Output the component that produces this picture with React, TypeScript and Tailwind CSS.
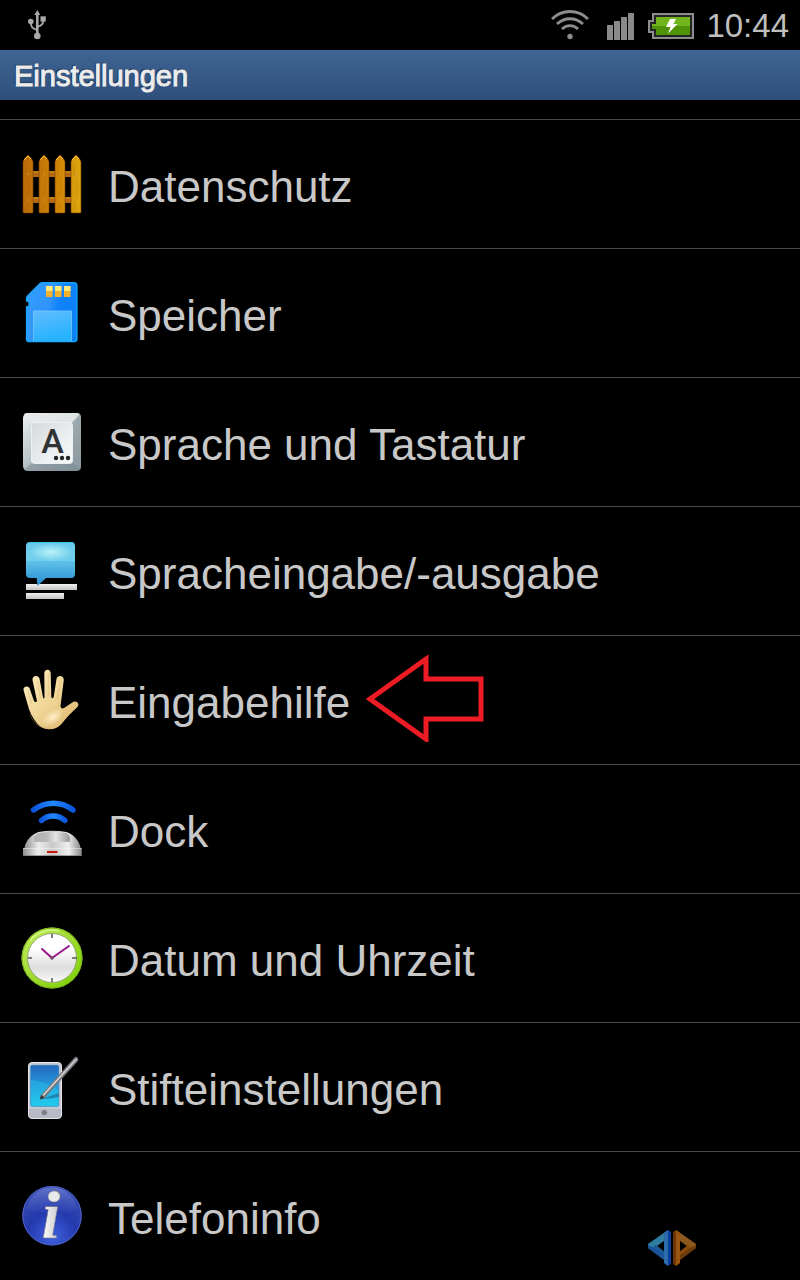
import type { ReactNode } from "react";

function UsbIcon() {
  return (
    <svg width="18" height="30" viewBox="0 0 18 30" fill="none" stroke="#a9a9a9" strokeWidth="1.8">
      <path d="M9.3 4v20" strokeWidth="2.6" />
      <path d="M2.8 12c0 5 1.5 6.5 6.5 8M15.3 10c0 4-1.5 5.5-6 7" />
      <path d="M9.3 0l3 5h-6z" fill="#a9a9a9" stroke="none" />
      <circle cx="2.8" cy="11.5" r="2.8" fill="#a9a9a9" stroke="none" />
      <rect x="12.5" y="6.3" width="5.3" height="5.3" fill="#a9a9a9" stroke="none" />
      <circle cx="9.3" cy="26" r="3.3" fill="#a9a9a9" stroke="none" />
    </svg>
  );
}

function WifiIcon() {
  return (
    <svg width="38" height="30" viewBox="0 0 38 30" fill="none" stroke="#8d8d8d" strokeWidth="2.8">
      <path d="M1 9c10-10 26-10 36 0" />
      <path d="M6 14c7.500-7 18.500-7 26 0" />
      <path d="M11 19c4.500-4.500 11.500-4.500 16 0" />
      <circle cx="19" cy="26.500" r="2.700" fill="#8d8d8d" stroke="none" />
    </svg>
  );
}

function SignalIcon() {
  return (
    <svg width="27" height="27" viewBox="0 0 27 27" fill="#8a8a8a">
      <rect x="0" y="12" width="6" height="15" rx="0.5" />
      <rect x="7" y="8" width="6" height="19" rx="0.5" />
      <rect x="14" y="4" width="6" height="23" rx="0.5" />
      <rect x="21" y="0" width="6" height="27" rx="0.5" />
    </svg>
  );
}

function BatteryIcon() {
  return (
    <svg width="46" height="26" viewBox="0 0 46 26">
      <path d="M4 0h42v26H4v-6H0V7h4z" fill="#8d8d8d" />
      <path d="M6 2h38v22H6v-6H2V9h4z" fill="#242424" />
      <path d="M8 4h34v18H8v-6H4v-5h4z" fill="#4f9407" />
      <path d="M8 4h34v9H4v-2h4z" fill="#70b51c" />
      <path d="M22 6h6l-2.5 5h4L20 20.500l2.5-6.5H18z" fill="#fff" />
    </svg>
  );
}

function FenceIcon() {
  return (
    <svg className="shrink-0" width="64" height="64" viewBox="0 0 64 64">
      <defs>
        <linearGradient id="wood" x1="0" x2="64" y1="0" y2="0" gradientUnits="userSpaceOnUse">
          <stop offset="0" stopColor="#b96808" />
          <stop offset="0.6" stopColor="#cf8506" />
          <stop offset="1" stopColor="#e0aa10" />
        </linearGradient>
      </defs>
      <path d="M5 19h54v6H5zM5 45h54v6H5z" fill="#b3690c" />
      <path d="M12 20h42M12 46h42" stroke="#d99420" />
      {[3, 19, 35, 51].map((x) => (
        <g key={x}>
          <path d={`M${x} 10q0-1 2-4l3-3 3 3q2 3 2 4v50q0 1-1 1h-8q-1 0-1-1z`} fill="url(#wood)" stroke="#7c4304" strokeWidth="0.6" />
          <path d={`M${x + 1} 8l4-4 3 3`} fill="none" stroke="#ffc238" strokeWidth="1" />
          <path d={`M${x + 3} 12v12M${x + 6} 27v16M${x + 4} 51v7`} stroke="#9c5b05" strokeWidth="0.7" opacity="0.3" />
          <circle cx={x + 5} cy="22" r="0.8" fill="#c09a58" />
          <circle cx={x + 5} cy="48" r="0.8" fill="#c09a58" />
        </g>
      ))}
    </svg>
  );
}

function StorageIcon() {
  return (
    <svg className="shrink-0" width="64" height="64" viewBox="0 0 64 64">
      <defs>
        <linearGradient id="card" x1="0" x2="1" y1="0.2" y2="0.6">
          <stop offset="0" stopColor="#329eff" />
          <stop offset="0.45" stopColor="#2f93fb" />
          <stop offset="0.6" stopColor="#1183fb" />
          <stop offset="1" stopColor="#0a80f5" />
        </linearGradient>
        <linearGradient id="cardLabel" x1="0" x2="0.3" y1="0" y2="1">
          <stop offset="0" stopColor="#63bcff" />
          <stop offset="1" stopColor="#25b2ff" />
        </linearGradient>
      </defs>
      <path d="M22 1.700h32q3 0 3 3V58q0 2.700-3 2.700H9q-2.500 0-2.500-2.700V26l2.500-1v-4l-2.500-1v-3q0-1 1-2L20 2.500q1-.8 2-.8z" fill="url(#card)" stroke="#12aaff" strokeWidth="1.2" />
      <path d="M13.500 30h38v30.500h-38z" fill="url(#cardLabel)" />
      <path d="M13.500 60V30h38v30" fill="none" stroke="#77c8ff" strokeWidth="0.8" />
      {[26, 35, 44].map((x) => (
        <g key={x}>
          <rect x={x} y="5" width="6.5" height="11" fill="#f3b22e" />
          <rect x={x} y="5" width="6.5" height="5" fill="#ffe978" />
        </g>
      ))}
    </svg>
  );
}

function KeyboardIcon() {
  return (
    <svg className="shrink-0" width="64" height="64" viewBox="0 0 64 64">
      <defs>
        <linearGradient id="keyFace" x1="0" x2="1" y1="0" y2="1">
          <stop offset="0" stopColor="#d5dadc" />
          <stop offset="1" stopColor="#fafbfb" />
        </linearGradient>
        <linearGradient id="keySide" x1="0" x2="1" y1="0" y2="1">
          <stop offset="0" stopColor="#eef1f1" />
          <stop offset="0.5" stopColor="#b4bec2" />
          <stop offset="1" stopColor="#74848b" />
        </linearGradient>
      </defs>
      <rect x="3" y="3" width="58" height="58" rx="5" fill="url(#keySide)" />
      <path d="M4 4l8 9h40l8-9q-1-1-3-1H7q-2 0-3 1z" fill="#e8ecec" opacity="0.8" />
      <path d="M60 4l-8 9v40l8 7q1-1 1-3V7q0-2-1-3z" fill="#93a1a6" opacity="0.7" />
      <path d="M4 60l8-7h40l8 7q-1 1-3 1H7q-2 0-3-1z" fill="#84939a" opacity="0.7" />
      <rect x="11.500" y="12.500" width="41" height="41" rx="3" fill="url(#keyFace)" stroke="#eef1f1" />
      <text x="32.500" y="43" textAnchor="middle" fontSize="34" fontWeight="500" fill="#303234" fontFamily="Roboto, sans-serif">A</text>
      <g fill="#232425">
        <circle cx="36" cy="48" r="2.200" />
        <circle cx="42" cy="48" r="2.200" />
        <circle cx="48" cy="48" r="2.200" />
      </g>
    </svg>
  );
}

function SpeechIcon() {
  return (
    <svg className="shrink-0" width="64" height="64" viewBox="0 0 64 64">
      <defs>
        <linearGradient id="bubble" x1="0" x2="0" y1="0" y2="1">
          <stop offset="0" stopColor="#68caea" />
          <stop offset="0.42" stopColor="#72cfec" />
          <stop offset="0.44" stopColor="#5dc2e7" />
          <stop offset="1" stopColor="#278bd0" />
        </linearGradient>
        <radialGradient id="bubbleShine">
          <stop offset="0" stopColor="#c4f6fb" stopOpacity="0.9" />
          <stop offset="1" stopColor="#c4f6fb" stopOpacity="0" />
        </radialGradient>
        <linearGradient id="line" x1="0" x2="0" y1="0" y2="1">
          <stop offset="0" stopColor="#efefef" />
          <stop offset="1" stopColor="#c2c2c2" />
        </linearGradient>
      </defs>
      <rect x="6" y="45" width="51" height="6" fill="url(#line)" />
      <rect x="6" y="54" width="38" height="6" fill="url(#line)" />
      <path d="M10 3h41q4 0 4 4v28q0 4-4 4H26l-8.500 8-.8-8H10q-4 0-4-4V7q0-4 4-4z" fill="url(#bubble)" />
      <ellipse cx="31" cy="13" rx="22" ry="9" fill="url(#bubbleShine)" />
      <path d="M8 4.500q1-1 3-1h39q3 0 4 1" fill="none" stroke="#38c5ef" />
    </svg>
  );
}

function HandIcon() {
  return (
    <svg className="shrink-0" width="64" height="64" viewBox="0 0 64 64">
      <defs>
        <linearGradient id="skin" x1="0" x2="64" y1="0" y2="64" gradientUnits="userSpaceOnUse">
          <stop offset="0" stopColor="#fff0c5" />
          <stop offset="0.5" stopColor="#efd596" />
          <stop offset="1" stopColor="#d9ad61" />
        </linearGradient>
        <radialGradient id="palm">
          <stop offset="0" stopColor="#fff0c9" />
          <stop offset="1" stopColor="#fff0c9" stopOpacity="0" />
        </radialGradient>
      </defs>
      <path
        d="M3.500 22c-.6-3.500 4.500-5 6.200-1.500L14 33q1.500 1.800 3 .3L12.500 12c-.5-4.500 5.500-5.500 7-1.500l3.500 19q.8 2.200 1.500 0L24.300 5c.5-4.500 6-4.500 6.400 0l.6 24q1 2.400 2.400 0L36.500 11c1-4.500 7.500-3.500 7.300 1l-3.300 26q.2 3.500 3.500 2l9-6c4-2 7.500 2.500 4 5.500C51 45 46 50 41.500 56c-6 7-18 7-24 0C12 49 9 43 7.500 36z"
        fill="url(#skin)"
      />
      <ellipse cx="33" cy="49" rx="12" ry="7" transform="rotate(-32 33 49)" fill="url(#palm)" />
      <path d="M40.500 13l-3 17M28.500 6v22M17.500 13l3 17M8.500 24l3 11" stroke="#cda45b" strokeWidth="1.5" opacity="0.25" strokeLinecap="round" />
      <path d="M10 46c4 11 11 15 20 14" fill="none" stroke="#c69a50" opacity="0.4" />
    </svg>
  );
}

function DockIcon() {
  return (
    <svg className="shrink-0" width="64" height="64" viewBox="0 0 64 64">
      <defs>
        <linearGradient id="metal" x1="0" x2="1" y1="0" y2="0">
          <stop offset="0" stopColor="#8e8e8e" />
          <stop offset="0.25" stopColor="#ececec" />
          <stop offset="0.5" stopColor="#c9c9c9" />
          <stop offset="0.78" stopColor="#eeeeee" />
          <stop offset="1" stopColor="#8b8b8b" />
        </linearGradient>
        <linearGradient id="dockTop" x1="0" x2="1" y1="0" y2="0">
          <stop offset="0" stopColor="#b2b2b2" />
          <stop offset="0.35" stopColor="#b9b9b9" />
          <stop offset="0.6" stopColor="#e4e4e4" />
          <stop offset="1" stopColor="#999" />
        </linearGradient>
        <linearGradient id="wave" x1="0" x2="1" y1="0" y2="0">
          <stop offset="0" stopColor="#0b55db" />
          <stop offset="0.5" stopColor="#2388ff" />
          <stop offset="1" stopColor="#0a56dc" />
        </linearGradient>
      </defs>
      <g fill="none" stroke="url(#wave)" strokeLinecap="round" strokeWidth="5.4">
        <path d="M13.500 13c12-9 28-9 39.500 0" />
        <path d="M21.500 23.500c6-6 17-6 23.500 0" />
      </g>
      <path d="M4.500 51c1-8 8-14 14-16q14-2.500 28 0c6 2 13 8 14 16z" fill="url(#metal)" />
      <path d="M18 36q14-2 29 0l3 4v4q0 1-2 1H16q-2 0-2-1v-4z" fill="url(#dockTop)" />
      <path d="M3 51h58.700v8H3z" fill="url(#metal)" />
      <path d="M3 51.500h58.700" stroke="#fff" opacity="0.4" />
      <path d="M3 58.500h58.700" stroke="#6f6f6f" opacity="0.6" />
      <rect x="27" y="54" width="10.500" height="2" fill="#c8190c" />
    </svg>
  );
}

function ClockIcon() {
  return (
    <svg className="shrink-0" width="64" height="64" viewBox="0 0 64 64">
      <defs>
        <linearGradient id="rim" x1="0" x2="1" y1="0" y2="1">
          <stop offset="0" stopColor="#c5ef5b" />
          <stop offset="0.45" stopColor="#a2db35" />
          <stop offset="1" stopColor="#79d000" />
        </linearGradient>
        <linearGradient id="dial" x1="0" x2="0" y1="0" y2="1">
          <stop offset="0.3" stopColor="#fff" />
          <stop offset="0.7" stopColor="#dedede" />
          <stop offset="1" stopColor="#fafafa" />
        </linearGradient>
      </defs>
      <circle cx="32" cy="32" r="30.500" fill="url(#rim)" />
      <circle cx="32" cy="32" r="30" fill="none" stroke="#7bb317" />
      <path d="M10 15C16 6 29 2 39 5" fill="none" stroke="#e8ffb0" strokeWidth="2" opacity="0.5" />
      <circle cx="32" cy="32" r="24.500" fill="url(#dial)" stroke="#94a673" />
      <path d="M32 8v4M32 52v4M8 32h4M52 32h5" stroke="#595959" strokeWidth="1.5" />
      <path d="M22 23l10 9 17-12" fill="none" stroke="#98158b" strokeWidth="2" strokeLinecap="round" />
      <circle cx="32" cy="32" r="1.800" fill="#6c5068" />
    </svg>
  );
}

function PenIcon() {
  return (
    <svg className="shrink-0" width="64" height="64" viewBox="0 0 64 64">
      <defs>
        <linearGradient id="screen" x1="0" x2="0" y1="0" y2="1">
          <stop offset="0" stopColor="#2368bd" />
          <stop offset="0.5" stopColor="#2499dc" />
          <stop offset="1" stopColor="#20d2ee" />
        </linearGradient>
      </defs>
      <rect x="8.500" y="7.500" width="33" height="56" rx="3.500" fill="#c6c8d3" stroke="#e5e6ec" />
      <path d="M9 54h32v6q0 3-3 3H12q-3 0-3-3z" fill="#a9abb8" opacity="0.5" />
      <rect x="10.700" y="10.300" width="28" height="41" rx="1.500" fill="url(#screen)" stroke="#2b82bc" strokeWidth="0.7" />
      <path d="M11 25c10 1 20 4 28 11v14H11z" fill="#27c2ec" opacity="0.4" />
      <path d="M21 44l18-6v4q-9 2-18 2z" fill="#12527c" opacity="0.5" />
      <circle cx="24.300" cy="57.500" r="2.600" fill="#7b7b84" stroke="#92929c" strokeWidth="0.6" />
      <path d="M20 44.500l1-4.500L54.500 2.500q1.500-1.500 3 0t.5 3.500L24.500 43z" fill="#77777d" />
      <path d="M23 40.500L56.500 4" stroke="#d6d6da" strokeWidth="1.6" />
      <path d="M20 44.500l1-4.500 3.500 3z" fill="#333" />
    </svg>
  );
}

function InfoIcon() {
  return (
    <svg className="shrink-0 overflow-visible" width="64" height="64" viewBox="0 0 64 64">
      <defs>
        <radialGradient id="ball" cx="0.5" cy="0.85" r="0.85">
          <stop offset="0" stopColor="#3e61e0" />
          <stop offset="0.5" stopColor="#2439ac" />
          <stop offset="1" stopColor="#3c50b6" />
        </radialGradient>
        <linearGradient id="ballShine" x1="0" x2="0" y1="0" y2="1">
          <stop offset="0" stopColor="#8796dc" stopOpacity="0.5" />
          <stop offset="1" stopColor="#6174cc" stopOpacity="0.05" />
        </linearGradient>
        <linearGradient id="silver" x1="0" x2="1" y1="0" y2="0">
          <stop offset="0" stopColor="#fff" />
          <stop offset="1" stopColor="#c4c4c8" />
        </linearGradient>
      </defs>
      <circle cx="32" cy="31.700" r="29.700" fill="url(#ball)" />
      <circle cx="32" cy="31.700" r="29.200" fill="none" stroke="#4c61c6" />
      <path d="M7 25C10 11 20 3.500 32 3.500S54 11 57 25c-11 6-37 6-50 0z" fill="url(#ballShine)" />
      <text x="31" y="54" textAnchor="middle" fontSize="68" fontStyle="italic" fontWeight="700" fill="url(#silver)" stroke="#74747c" strokeWidth="0.5" fontFamily="Liberation Serif, serif">i</text>
      <ellipse cx="34" cy="12.500" rx="6" ry="5.500" fill="#e9e9ec" stroke="#74747c" strokeWidth="0.5" />
    </svg>
  );
}

function ArrowMarker() {
  return (
    <svg className="ml-4 mb-1 shrink-0" width="118" height="88" viewBox="0 0 118 88" fill="none" stroke="#ed1c24" strokeWidth="5">
      <path d="M4 45L60 5v20h55v40H60v20z" />
    </svg>
  );
}

function CornerLogo() {
  return (
    <svg className="absolute right-[104px] bottom-[14px]" width="48" height="36" viewBox="0 0 48 36">
      <path d="M0 14L20 0v8L9 16l8 7v6L0 18z" fill="#2f7da0" />
      <path d="M0 15l17 8v8L0 18z" fill="#1a5397" />
      <path d="M8 15l9 7v4L5 17z" fill="#1c5a99" />
      <path d="M16 3l4-3v36l-4-3z" fill="#2b6dab" />
      <path d="M20 0l3 2v32l-3 2z" fill="#0b3b9b" />
      <path d="M48 14L28 0v8l11 8-8 7v6l17-11z" fill="#8d591c" />
      <path d="M48 15l-17 8v8l17-13z" fill="#6b3b09" />
      <path d="M40 15l-9 7v4l12-9z" fill="#8a4b0b" />
      <path d="M32 3l-4-3v36l4-3z" fill="#9a550e" />
      <path d="M28 0l-3 2v32l3 2z" fill="#6c3704" />
    </svg>
  );
}

type Item = { label: string; icon: ReactNode; marked?: boolean };

const items: Item[] = [
  { label: "Datenschutz", icon: <FenceIcon /> },
  { label: "Speicher", icon: <StorageIcon /> },
  { label: "Sprache und Tastatur", icon: <KeyboardIcon /> },
  { label: "Spracheingabe/-ausgabe", icon: <SpeechIcon /> },
  { label: "Eingabehilfe", icon: <HandIcon />, marked: true },
  { label: "Dock", icon: <DockIcon /> },
  { label: "Datum und Uhrzeit", icon: <ClockIcon /> },
  { label: "Stifteinstellungen", icon: <PenIcon /> },
  { label: "Telefoninfo", icon: <InfoIcon /> },
];

export default function App() {
  return (
    <div className="relative min-h-screen bg-black font-['Liberation_Sans',Arial,sans-serif] text-[#c8c8c8]">
      {/* Status bar */}
      <header className="flex h-[50px] items-center justify-between pr-[11px] pl-7">
        <UsbIcon />
        <div className="flex items-center">
          <WifiIcon />
          <div className="ml-[18px] pt-[3px]">
            <SignalIcon />
          </div>
          <div className="ml-[14px] pt-[2px]">
            <BatteryIcon />
          </div>
          <span className="ml-3 pt-[2px] text-[33px] leading-[48px] text-[#bebebe]">10:44</span>
        </div>
      </header>
      {/* Title bar */}
      <h1 className="h-[50px] bg-linear-to-b from-[#3f6593] to-[#2f4f7b] px-[14px] text-[29px] leading-[52px] text-[#ececec] [-webkit-text-stroke:1px_#ececec] [text-shadow:-1px_-1px_1px_#0c1a2c]">
        Einstellungen
      </h1>
      <main>
        <div className="h-5 border-b border-[#4a4a4a]" />
        <ul className="divide-y divide-[#4a4a4a]">
          {items.map((item) => (
            <li key={item.label}>
              <button type="button" className="flex h-32 w-full items-center px-5 text-left">
                {item.icon}
                <span className="ml-6 pt-1.5 text-[44px] leading-[52px] whitespace-nowrap">{item.label}</span>
                {item.marked && <ArrowMarker />}
              </button>
            </li>
          ))}
        </ul>
      </main>
      <CornerLogo />
    </div>
  );
}
